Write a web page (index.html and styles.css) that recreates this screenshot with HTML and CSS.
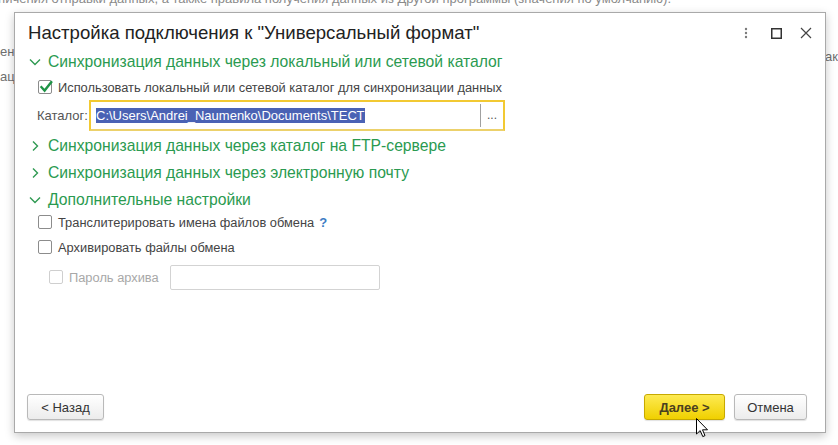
FILE: index.html
```html
<!DOCTYPE html>
<html lang="ru">
<head>
<meta charset="utf-8">
<title>Настройка подключения</title>
<link rel="stylesheet" href="styles.css">
</head>
<body>
<div class="page">
  <div class="bg-line bg-top">ничения отправки данных, а также правила получения данных из Другой программы (значения по умолчанию).</div>
  <div class="bg-row bg-row1"><span>ен</span><span class="bg-right">ак</span></div>
  <div class="bg-row bg-row2"><span>ац</span></div>
</div>

<div class="dialog">
  <div class="hdr">
    <div class="title">Настройка подключения к "Универсальный формат"</div>
    <div class="hdr-icons">
      <span class="hicon">
        <svg width="4" height="12" viewBox="0 0 4 12"><circle cx="2" cy="2" r="1.2" fill="#7a7a7a"/><circle cx="2" cy="6" r="1.2" fill="#7a7a7a"/><circle cx="2" cy="10" r="1.2" fill="#7a7a7a"/></svg>
      </span>
      <span class="hicon">
        <svg width="11" height="11" viewBox="0 0 11 11"><rect x="0.75" y="0.75" width="9.5" height="9.5" fill="none" stroke="#333" stroke-width="1.5"/></svg>
      </span>
      <span class="hicon">
        <svg width="12" height="12" viewBox="0 0 12 12"><path d="M1 1 L11 11 M11 1 L1 11" stroke="#444" stroke-width="1.2" fill="none"/></svg>
      </span>
    </div>
  </div>

  <div class="body">
    <div class="grp-h">
      <span class="chev"><svg width="12" height="12" viewBox="0 0 12 12"><path d="M1 3.5 L6 8.5 L11 3.5" fill="none" stroke="#2f9a52" stroke-width="1.4"/></svg></span>
      <span>Синхронизация данных через локальный или сетевой каталог</span>
    </div>
    <div class="cb-row mt3">
      <span class="cb checked"><svg width="14" height="14" viewBox="0 0 14 14"><path d="M2.5 7.2 L5.6 10.6 L12.2 2.2" fill="none" stroke="#1f9447" stroke-width="2.4" stroke-linecap="square"/></svg></span>
      <span class="cb-text">Использовать локальный или сетевой каталог для синхронизации данных</span>
    </div>
    <div class="cat-row mt3">
      <span class="cat-label">Каталог:</span>
      <div class="cat-input">
        <span class="cat-value"><span class="sel">C:\Users\Andrei_Naumenko\Documents\ТЕСТ</span></span>
        <span class="cat-sep"></span>
        <span class="cat-btn">...</span>
      </div>
    </div>
    <div class="grp-h mt3">
      <span class="chev"><svg width="12" height="12" viewBox="0 0 12 12"><path d="M4 1.5 L8.5 6 L4 10.5" fill="none" stroke="#2f9a52" stroke-width="1.4"/></svg></span>
      <span>Синхронизация данных через каталог на FTP-сервере</span>
    </div>
    <div class="grp-h mt3">
      <span class="chev"><svg width="12" height="12" viewBox="0 0 12 12"><path d="M4 1.5 L8.5 6 L4 10.5" fill="none" stroke="#2f9a52" stroke-width="1.4"/></svg></span>
      <span>Синхронизация данных через электронную почту</span>
    </div>
    <div class="grp-h mt3">
      <span class="chev"><svg width="12" height="12" viewBox="0 0 12 12"><path d="M1 3.5 L6 8.5 L11 3.5" fill="none" stroke="#2f9a52" stroke-width="1.4"/></svg></span>
      <span>Дополнительные настройки</span>
    </div>
    <div class="cb-row">
      <span class="cb"></span>
      <span class="cb-text">Транслитерировать имена файлов обмена</span>
      <span class="help">?</span>
    </div>
    <div class="cb-row mt5">
      <span class="cb"></span>
      <span class="cb-text">Архивировать файлы обмена</span>
    </div>
    <div class="pass-row">
      <span class="cb disabled"></span>
      <span class="cb-text dim">Пароль архива</span>
      <span class="pass-input"></span>
    </div>
  </div>

  <div class="footer">
    <button class="btn back">&lt; Назад</button>
    <div class="footer-right">
      <button class="btn primary">Далее &gt;</button>
      <button class="btn cancel">Отмена</button>
    </div>
  </div>
</div>

<svg class="cursor" width="13" height="20" viewBox="0 0 13 20"><path d="M0.5 0.5 L0.5 16 L4.2 12.6 L6.8 18.6 L9 17.6 L6.5 11.8 L11.5 11.8 Z" fill="#fff" stroke="#000" stroke-width="1" stroke-linejoin="miter"/></svg>
</body>
</html>
```

FILE: styles.css
```css
html, body {
  margin: 0;
  padding: 0;
  background: #ffffff;
}
body {
  width: 838px;
  height: 445px;
  overflow: hidden;
  position: relative;
  font-family: "Liberation Sans", Arial, sans-serif;
  font-size: 13px;
  color: #444;
}
.page {
  color: #6f6f6f;
  font-size: 13px;
}
.bg-line {
  white-space: nowrap;
  line-height: 16px;
}
.bg-top {
  margin-top: -9px;
  margin-left: -2px;
  color: #8a8a8a;
}
.bg-row {
  display: flex;
  justify-content: space-between;
  line-height: 16px;
}
.bg-row1 {
  margin-top: 37px;
}
.bg-right {
  padding-top: 5px;
}
.bg-row2 {
  margin-top: 4px;
}

.dialog {
  position: absolute;
  left: 14px;
  top: 12px;
  width: 812px;
  height: 421px;
  box-sizing: border-box;
  border: 1px solid #a9a9a9;
  background: #fff;
  box-shadow: 0 3px 9px rgba(0, 0, 0, 0.22);
  display: flex;
  flex-direction: column;
}
.hdr {
  height: 37px;
  display: flex;
  align-items: flex-start;
  justify-content: space-between;
  padding: 9px 9px 0 13px;
  box-sizing: border-box;
}
.title {
  font-size: 18.6px;
  line-height: 22px;
  color: #222;
  white-space: nowrap;
}
.hdr-icons {
  display: flex;
  gap: 10px;
  margin-top: 1px;
}
.hicon {
  width: 20px;
  height: 20px;
  display: flex;
  align-items: center;
  justify-content: center;
}

.body {
  flex: 1;
  display: flex;
  flex-direction: column;
  padding-left: 14px;
}
.mt3 { margin-top: 3px; }
.mt5 { margin-top: 5px; }

.grp-h {
  height: 24px;
  display: flex;
  align-items: center;
  font-size: 15.7px;
  color: #2a9a50;
  white-space: nowrap;
}
.chev {
  width: 19px;
  display: flex;
  align-items: center;
}
.cb-row {
  height: 20px;
  display: flex;
  align-items: center;
  padding-left: 9px;
  white-space: nowrap;
  font-size: 12.85px;
}
.cb {
  width: 14px;
  height: 14px;
  box-sizing: border-box;
  border: 1px solid #8c8c8c;
  border-radius: 2px;
  background: #fff;
  position: relative;
  flex: none;
}
.cb.checked svg {
  position: absolute;
  left: 0;
  top: -1px;
}
.cb.disabled {
  border-color: #cfcfcf;
}
.cb-text {
  margin-left: 6px;
  color: #444;
}
.cb-text.dim {
  color: #a8a8a8;
}
.help {
  margin-left: 5px;
  color: #3b7cc4;
  font-weight: bold;
  font-size: 13px;
}

.cat-row {
  height: 31px;
  display: flex;
  align-items: center;
  padding-left: 8px;
}
.cat-label {
  color: #555;
  width: 52px;
}
.cat-input {
  width: 416px;
  height: 31px;
  box-sizing: border-box;
  border: 2px solid #f2c932;
  border-bottom-color: #ecd16b;
  display: flex;
  align-items: center;
}
.cat-value {
  flex: 1;
  padding-left: 5px;
  white-space: nowrap;
  overflow: hidden;
}
.sel {
  background: #4a62b4;
  color: #fff;
  line-height: 15px;
  display: inline-block;
  padding-right: 1px;
}
.cat-sep {
  width: 1px;
  height: 23px;
  background: #a0a0a0;
}
.cat-btn {
  width: 22px;
  text-align: center;
  color: #555;
  font-size: 12px;
  line-height: 12px;
  padding-bottom: 2px;
}

.pass-row {
  height: 25px;
  margin-top: 8px;
  display: flex;
  align-items: center;
  padding-left: 20px;
  white-space: nowrap;
  font-size: 12.85px;
}
.pass-row .cb {
  margin-top: -2px;
}
.pass-input {
  width: 210px;
  height: 25px;
  box-sizing: border-box;
  border: 1px solid #d3d3d3;
  border-radius: 2px;
  margin-left: 11px;
}

.footer {
  display: flex;
  justify-content: space-between;
  align-items: center;
  padding: 0 18px 12px 12px;
}
.footer-right {
  display: flex;
  gap: 9px;
}
.btn {
  height: 26px;
  box-sizing: border-box;
  border: 1px solid #b9b9b9;
  border-radius: 3px;
  background: linear-gradient(#ffffff, #ececec);
  box-shadow: 0 1px 1px rgba(0, 0, 0, 0.12);
  font-family: "Liberation Sans", Arial, sans-serif;
  font-size: 13px;
  color: #333;
  padding: 0;
  white-space: nowrap;
  text-align: center;
}
.btn.back {
  width: 77px;
}
.btn.primary {
  width: 81px;
  background: linear-gradient(#fdea52, #f0d000);
  border-color: #c7a900;
  font-weight: bold;
  color: #4a4020;
}
.btn.cancel {
  width: 73px;
}
.cursor {
  position: absolute;
  left: 696px;
  top: 418px;
}
```
